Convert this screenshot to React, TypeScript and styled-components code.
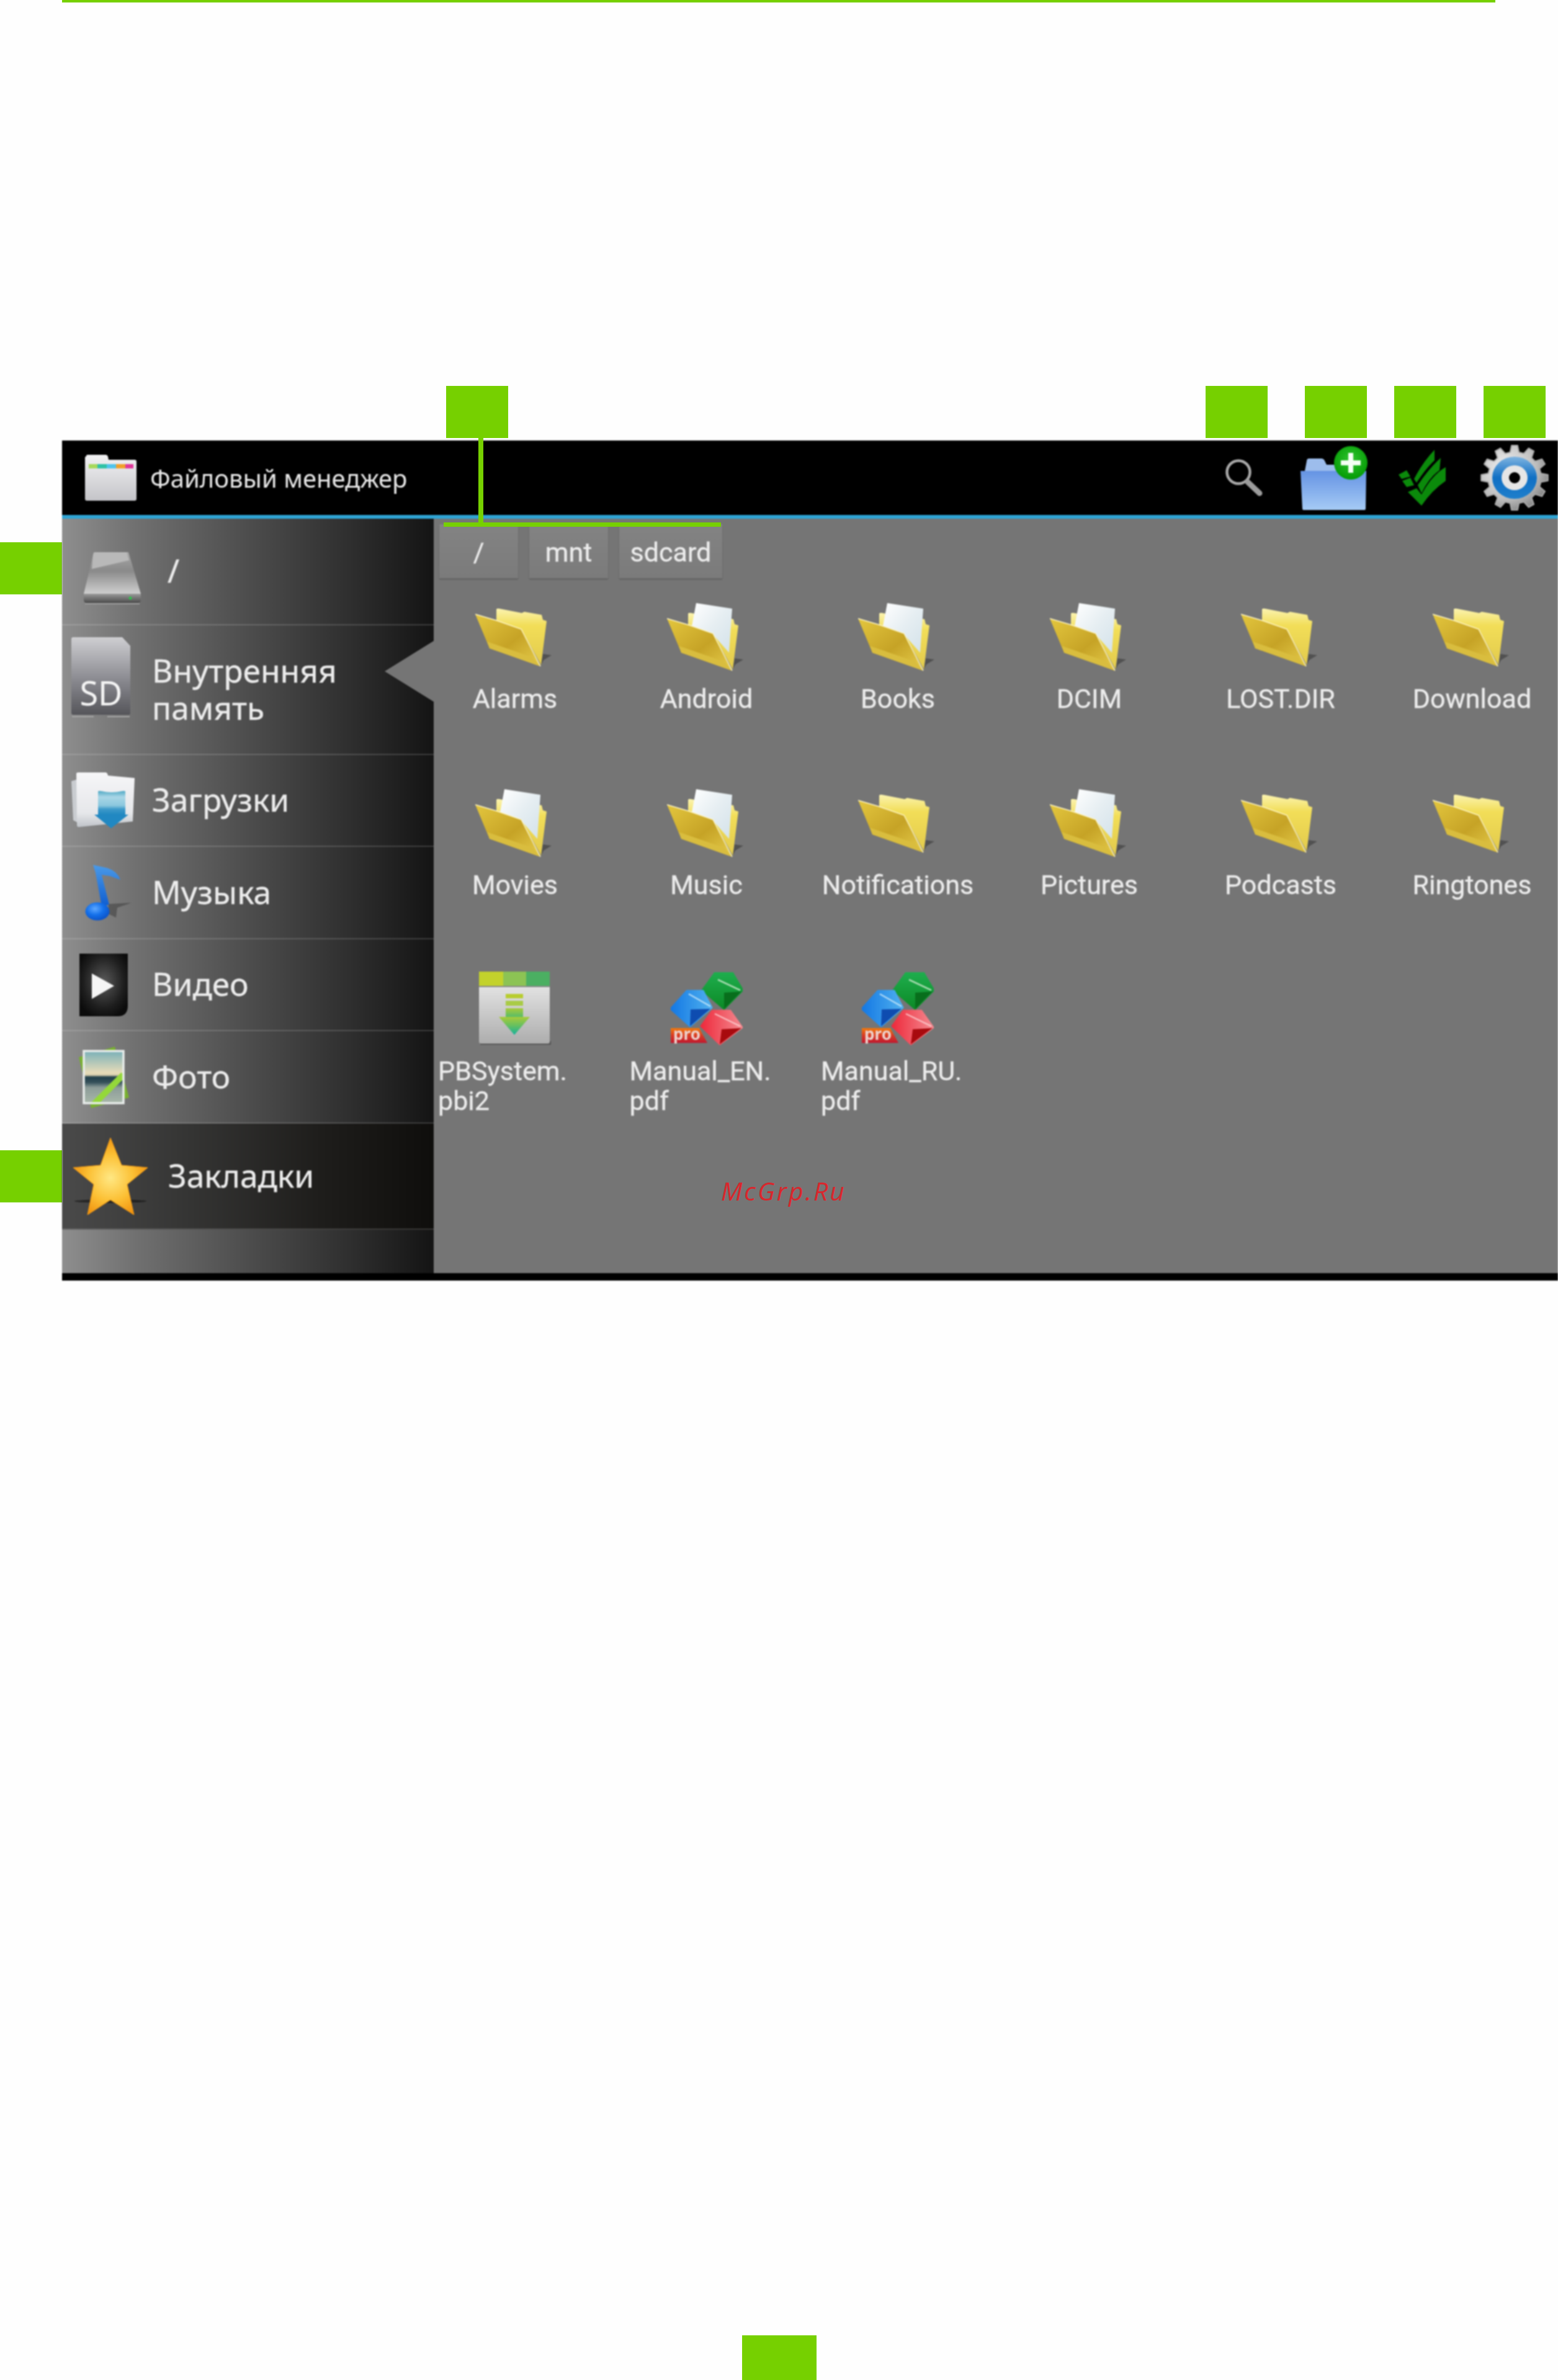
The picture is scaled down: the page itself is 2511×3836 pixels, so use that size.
import React from "react";
import styled, { createGlobalStyle } from "styled-components";

const GREEN = "#76d000";
const CONTENT = "#757575";
const ROW_BG = "linear-gradient(90deg, #8e8e8e 0%, #707070 20%, #4d4d4d 50%, #2e2e2e 78%, #141414 100%)";

const Global = createGlobalStyle`
  html, body { margin: 0; padding: 0; background: #fefefe; }
  body { font-family: "Noto Sans", "Liberation Sans", sans-serif; }
`;

const Page = styled.div`
  width: 2511px;
  height: 3836px;
  background: #fefefe;
  display: flex;
  flex-direction: column;
  overflow: hidden;
`;
const Rule = styled.div`
  margin-left: 100px;
  width: 2310px;
  height: 4px;
  flex: none;
  background: ${GREEN};
`;
const TagRow = styled.div`
  margin-top: 618px;
  padding-left: 719px;
  display: flex;
  height: 84px;
  flex: none;
`;
const Tag = styled.div<{ $before?: number }>`
  width: 100px;
  height: 84px;
  flex: none;
  background: ${GREEN};
  margin-left: ${(p) => p.$before ?? 0}px;
`;
const Figure = styled.div`
  margin-top: 4px;
  display: flex;
  position: relative;
  flex: none;
`;
const Gutter = styled.div`
  width: 100px;
  flex: none;
  padding-top: 164px;
  display: flex;
  flex-direction: column;
`;
const GutterTag = styled(Tag)<{ $top?: number }>`
  margin-top: ${(p) => p.$top ?? 0}px;
`;
const Screen = styled.div`
  width: 2411px;
  height: 1354px;
  flex: none;
  background: #000;
  display: flex;
  flex-direction: column;
  filter: blur(0.9px);
`;
const Toolbar = styled.div`
  height: 120px;
  flex: none;
  background: #000;
  border-bottom: 6px solid #2fa4d4;
  display: flex;
  align-items: center;
  padding-left: 37px;
  padding-right: 15px;
`;
const Title = styled.div`
  margin-left: 22px;
  color: #e8e8e8;
  font-family: "Noto Sans", sans-serif;
  font-size: 40px;
  white-space: nowrap;
`;
const Actions = styled.div`
  margin-left: auto;
  display: flex;
  align-items: center;
`;
const Action = styled.div<{ $gap: number }>`
  margin-left: ${(p) => p.$gap}px;
  display: flex;
`;
const Main = styled.div`
  height: 1216px;
  flex: none;
  display: flex;
`;
const Sidebar = styled.div`
  width: 599px;
  flex: none;
  display: flex;
  flex-direction: column;
`;
const Row = styled.div<{ $h: number; $active?: boolean }>`
  height: ${(p) => p.$h}px;
  flex: none;
  box-sizing: border-box;
  display: flex;
  align-items: center;
  position: relative;
  border-bottom: 2px solid rgba(255, 255, 255, 0.16);
  background: ${(p) =>
    p.$active
      ? "linear-gradient(90deg, #4a4a4a 0%, #343433 35%, #1e1d1b 70%, #0f0e0c 100%)"
      : ROW_BG};
`;
const Filler = styled.div`
  flex: 1;
  background: ${ROW_BG};
`;
const IconSlot = styled.div<{ $w: number; $pad: number; $down?: number; $up?: number }>`
  width: ${(p) => p.$w}px;
  box-sizing: border-box;
  flex: none;
  padding-left: ${(p) => p.$pad}px;
  margin-top: ${(p) => p.$down ?? 0}px;
  margin-bottom: ${(p) => p.$up ?? 0}px;
  display: flex;
`;
const RowText = styled.div`
  color: #ececec;
  font-family: "Noto Sans", sans-serif;
  font-size: 51.5px;
  line-height: 60px;
  margin-bottom: 4px;
  -webkit-text-stroke: 0.3px #ececec;
  white-space: pre-line;
`;
const Pointer = styled.div`
  position: absolute;
  right: 0;
  top: 25px;
  width: 79px;
  height: 98px;
  background: ${CONTENT};
  clip-path: polygon(0 50%, 100% 0, 100% 100%);
`;
const Content = styled.div`
  flex: 1;
  background: ${CONTENT};
  min-width: 0;
  overflow: hidden;
`;
const Crumbs = styled.div`
  padding: 9px 0 0 9px;
  display: flex;
  gap: 18px;
`;
const Crumb = styled.div<{ $w: number }>`
  width: ${(p) => p.$w}px;
  height: 87px;
  box-sizing: border-box;
  padding-top: 3px;
  display: flex;
  align-items: center;
  justify-content: center;
  color: #ececec;
  font-family: Roboto, sans-serif;
  font-size: 43px;
  -webkit-text-stroke: 0.3px #ececec;
  background: linear-gradient(180deg, #838383, #7b7b7b);
  box-shadow: 0 2px 2px rgba(0, 0, 0, 0.18);
`;
const Grid = styled.div`
  margin-top: 34px;
  padding-left: 7px;
  display: grid;
  grid-template-columns: repeat(6, 248px);
  column-gap: 60.5px;
  grid-auto-rows: 300px;
`;
const Cell = styled.div`
  display: flex;
  flex-direction: column;
  align-items: center;
`;
const CellIcon = styled.div`
  height: 120px;
  display: flex;
  align-items: center;
  justify-content: center;
  flex: none;
`;
const CellLabel = styled.div<{ $multi?: boolean }>`
  margin-top: 16px;
  width: 248px;
  color: #ececec;
  font-family: Roboto, sans-serif;
  font-size: 43px;
  line-height: 48px;
  -webkit-text-stroke: 0.3px #ececec;
  text-align: ${(p) => (p.$multi ? "left" : "center")};
  white-space: pre;
`;
const ConnectorV = styled.div`
  position: absolute;
  left: 771px;
  top: -4px;
  width: 8px;
  height: 143px;
  background: ${GREEN};
`;
const ConnectorH = styled.div`
  position: absolute;
  left: 715px;
  top: 132px;
  width: 447px;
  height: 7px;
  background: ${GREEN};
`;
const Watermark = styled.div`
  position: absolute;
  left: 1162px;
  top: 1184px;
  color: #d9262c;
  font-family: "Open Sans", sans-serif;
  font-style: italic;
  font-size: 41px;
  line-height: 50px;
  letter-spacing: 3px;
`;
const FootTag = styled.div`
  width: 120px;
  height: 72px;
  flex: none;
  margin: auto auto 0;
  background: ${GREEN};
`;
const DefsSvg = styled.svg`
  position: absolute;
  width: 0;
  height: 0;
`;

const Defs = () => (
  <DefsSvg aria-hidden="true">
    <defs>
      <linearGradient id="fBack" x1="0" y1="0" x2="0" y2="1">
        <stop offset="0" stopColor="#fbf3b0" />
        <stop offset="0.3" stopColor="#f2de58" />
        <stop offset="1" stopColor="#e2ca4c" />
      </linearGradient>
      <linearGradient id="fFront" x1="0" y1="0" x2="1" y2="1">
        <stop offset="0" stopColor="#e3c63e" />
        <stop offset="0.55" stopColor="#c6a326" />
        <stop offset="1" stopColor="#e6cd4c" />
      </linearGradient>
      <linearGradient id="fPaper" x1="0" y1="0" x2="1" y2="1">
        <stop offset="0" stopColor="#ffffff" />
        <stop offset="0.5" stopColor="#e6eef2" />
        <stop offset="1" stopColor="#d3e2ea" />
      </linearGradient>
      <linearGradient id="pbBody" x1="0" y1="0" x2="0" y2="1">
        <stop offset="0" stopColor="#f0f0f0" />
        <stop offset="1" stopColor="#adadad" />
      </linearGradient>
      <linearGradient id="pbArrow" x1="0" y1="0" x2="0" y2="1">
        <stop offset="0" stopColor="#a9cb3a" />
        <stop offset="0.5" stopColor="#63bf62" />
        <stop offset="1" stopColor="#14b29c" />
      </linearGradient>
      <linearGradient id="cubeG" x1="0" y1="0" x2="0" y2="1">
        <stop offset="0" stopColor="#1fae4e" />
        <stop offset="1" stopColor="#0c8a26" />
      </linearGradient>
      <linearGradient id="cubeB" x1="0" y1="0" x2="1" y2="0">
        <stop offset="0" stopColor="#1478e4" />
        <stop offset="1" stopColor="#4fb0ee" />
      </linearGradient>
      <linearGradient id="cubeR" x1="0" y1="0" x2="1" y2="0">
        <stop offset="0" stopColor="#ee2a3c" />
        <stop offset="1" stopColor="#f48a90" />
      </linearGradient>
      <linearGradient id="proBg" x1="0" y1="0" x2="0" y2="1">
        <stop offset="0" stopColor="#f27a0c" />
        <stop offset="0.5" stopColor="#d83a24" />
        <stop offset="1" stopColor="#c01a30" />
      </linearGradient>
      <linearGradient id="diskBody" x1="0" y1="0" x2="0" y2="1">
        <stop offset="0" stopColor="#a8a8a8" />
        <stop offset="0.45" stopColor="#8a8a8a" />
        <stop offset="1" stopColor="#cfcfcf" />
      </linearGradient>
      <linearGradient id="diskFoot" x1="0" y1="0" x2="0" y2="1">
        <stop offset="0" stopColor="#9a9a9a" />
        <stop offset="1" stopColor="#4a4a4a" />
      </linearGradient>
      <linearGradient id="sdBody" x1="0" y1="0" x2="0" y2="1">
        <stop offset="0" stopColor="#cfcfd2" />
        <stop offset="0.6" stopColor="#84848a" />
        <stop offset="1" stopColor="#55555a" />
      </linearGradient>
      <linearGradient id="dlPaper" x1="0" y1="0" x2="0" y2="1">
        <stop offset="0" stopColor="#f6f6f8" />
        <stop offset="0.75" stopColor="#e6e7ea" />
        <stop offset="1" stopColor="#bfc3c9" />
      </linearGradient>
      <linearGradient id="dlArrow" x1="0" y1="0" x2="0" y2="1">
        <stop offset="0" stopColor="#4fa8c4" />
        <stop offset="0.25" stopColor="#a9d6e6" />
        <stop offset="0.6" stopColor="#8cc8de" />
        <stop offset="0.75" stopColor="#3d9aca" />
        <stop offset="1" stopColor="#1f86c0" />
      </linearGradient>
      <linearGradient id="noteBlue" x1="0" y1="0" x2="0" y2="1">
        <stop offset="0" stopColor="#4a9ae8" />
        <stop offset="1" stopColor="#0f5dd0" />
      </linearGradient>
      <radialGradient id="noteHead" cx="0.4" cy="0.35" r="0.7">
        <stop offset="0" stopColor="#5ea8ff" />
        <stop offset="0.5" stopColor="#1470ea" />
        <stop offset="1" stopColor="#0b50c4" />
      </radialGradient>
      <radialGradient id="videoBg" cx="0.5" cy="0.45" r="0.6">
        <stop offset="0" stopColor="#5a5a5a" />
        <stop offset="0.7" stopColor="#1e1e1e" />
        <stop offset="1" stopColor="#0c0c0c" />
      </radialGradient>
      <linearGradient id="photoImg" x1="0" y1="0" x2="0" y2="1">
        <stop offset="0" stopColor="#79b0b8" />
        <stop offset="0.42" stopColor="#e8dcb8" />
        <stop offset="0.46" stopColor="#d8cfae" />
        <stop offset="0.5" stopColor="#22404a" />
        <stop offset="0.6" stopColor="#34505a" />
        <stop offset="0.7" stopColor="#8c9c98" />
        <stop offset="1" stopColor="#a8b7aa" />
      </linearGradient>
      <radialGradient id="starFill" cx="0.5" cy="0.52" r="0.55">
        <stop offset="0" stopColor="#ffe884" />
        <stop offset="0.55" stopColor="#fcc034" />
        <stop offset="1" stopColor="#ef8f0c" />
      </radialGradient>
      <linearGradient id="appFolder" x1="0" y1="0" x2="0" y2="1">
        <stop offset="0" stopColor="#f2f2f4" />
        <stop offset="1" stopColor="#c4c4c8" />
      </linearGradient>
      <linearGradient id="newFolder" x1="0" y1="0" x2="0" y2="1">
        <stop offset="0" stopColor="#6593e4" />
        <stop offset="1" stopColor="#a6cbf5" />
      </linearGradient>
      <radialGradient id="plusBg" cx="0.5" cy="0.4" r="0.6">
        <stop offset="0" stopColor="#2fc52f" />
        <stop offset="1" stopColor="#049a04" />
      </radialGradient>
      <radialGradient id="gearFill" cx="0.35" cy="0.35" r="0.8">
        <stop offset="0" stopColor="#f2f2f2" />
        <stop offset="0.6" stopColor="#bdbdbd" />
        <stop offset="1" stopColor="#6e6e6e" />
      </radialGradient>
      <linearGradient id="gearBlue" x1="0" y1="0" x2="0" y2="1">
        <stop offset="0" stopColor="#7fb4e0" />
        <stop offset="0.5" stopColor="#0f6fc4" />
        <stop offset="1" stopColor="#1f7fcc" />
      </linearGradient>
      <clipPath id="photoClip">
        <rect x="8" y="8" width="64" height="84" />
      </clipPath>
    </defs>
  </DefsSvg>
);

/* ---------- toolbar icons ---------- */
const AppFolderIcon = () => (
  <svg width="83" height="74" viewBox="0 0 83 74">
    <path d="M2 2 Q2 0 4 0 H33 Q36 0 37 3 L38 8 H80 Q83 8 83 11 V71 Q83 74 80 74 H3 Q0 74 0 71 V4 Z" fill="url(#appFolder)" />
    <rect x="6" y="15" width="14" height="7" fill="#a6d95b" />
    <rect x="20" y="15" width="15" height="7" fill="#2fc2a6" />
    <rect x="35" y="15" width="15" height="7" fill="#4fc4ec" />
    <rect x="50" y="15" width="15" height="7" fill="#f0a02a" />
    <rect x="65" y="15" width="13" height="7" fill="#e0389a" />
  </svg>
);
const SearchIcon = () => (
  <svg width="60" height="60" viewBox="0 0 60 60">
    <circle cx="21" cy="21" r="18.5" fill="none" stroke="#a8a8a8" strokeWidth="4.5" />
    <line x1="36" y1="37" x2="55" y2="55" stroke="#9c9c9c" strokeWidth="9" strokeLinecap="round" />
  </svg>
);
const NewFolderIcon = () => (
  <svg width="108" height="103" viewBox="0 0 108 103">
    <path d="M10 24 Q10 20 14 20 H34 Q38 20 40 26 L42 30 H90 V50 H5 Z" fill="#9dbdec" />
    <path d="M0 40 H106 L105 101 Q105 103 103 103 H5 Q3 103 3 101 Z" fill="url(#newFolder)" />
    <ellipse cx="81" cy="27" rx="27" ry="27" fill="url(#plusBg)" />
    <path d="M77 11 H85 V23 H97 V31 H85 V43 H77 V31 H65 V23 H77 Z" fill="#f4fff4" />
  </svg>
);
const CheckIcon = () => (
  <svg width="77" height="90" viewBox="0 0 77 90" fill="#0b8a0b">
    <polygon points="1,40 14,33 20,43 6,47" />
    <polygon points="7,50 20,45 26,57 14,60" />
    <path d="M26 47 Q40 20 59 0 L59 17 Q45 30 30 53 Z" />
    <path d="M32 57 Q50 30 69 13 L67 33 Q50 45 38 70 Z" />
    <path d="M16 68 L30 62 L38 72 Q55 40 77 28 L77 50 Q55 65 38 90 Z" />
  </svg>
);
const gearPath = (() => {
  const teeth = 12;
  const pts: string[] = [];
  for (let i = 0; i < teeth; i++) {
    const a = (i / teeth) * Math.PI * 2 - Math.PI / 2;
    const s = (Math.PI * 2) / teeth;
    const at = (r: number, t: number) =>
      `${(55 + r * Math.cos(t)).toFixed(1)},${(53 + r * Math.sin(t) * 0.97).toFixed(1)}`;
    pts.push(at(43, a - s * 0.32), at(54, a - s * 0.17), at(54, a + s * 0.17), at(43, a + s * 0.32));
  }
  return pts.join(" ");
})();
const GearIcon = () => (
  <svg width="110" height="106" viewBox="0 0 110 106">
    <polygon points={gearPath} fill="url(#gearFill)" stroke="#aaa" strokeWidth="2" strokeLinejoin="round" />
    <ellipse cx="55" cy="53" rx="36" ry="34" fill="url(#gearBlue)" />
    <ellipse cx="55" cy="53" rx="21" ry="20" fill="#e6e6e6" />
    <ellipse cx="55" cy="53" rx="9" ry="9" fill="#000" />
  </svg>
);

/* ---------- sidebar icons ---------- */
const DiskIcon = () => (
  <svg width="92" height="85" viewBox="0 0 92 85">
    <path d="M16 1 H72 L92 68 H0 Z" fill="url(#diskBody)" />
    <path d="M15 5 Q16 1 20 1 H69 L73 14 L13 28 Z" fill="#b9b9b9" />
    <path d="M0 68 H92 V78 Q92 83 87 83 H5 Q0 83 0 78 Z" fill="url(#diskFoot)" />
    <rect x="2" y="83" width="88" height="2" fill="#a0a0a0" />
    <circle cx="75" cy="75" r="2.5" fill="#2fc24a" />
  </svg>
);
const SdIcon = () => (
  <svg width="95" height="130" viewBox="0 0 95 130">
    <path d="M3 0 H82 L95 14 V122 Q95 125 92 125 H3 Q0 125 0 122 V3 Q0 0 3 0 Z" fill="url(#sdBody)" />
    <path d="M1 128 H36 M58 128 H94" stroke="#a5a5a5" strokeWidth="2" />
    <text x="48" y="110" textAnchor="middle" fontFamily="'Noto Sans', sans-serif" fontSize="54" fill="#f4f4f4">SD</text>
  </svg>
);
const DownloadsIcon = () => (
  <svg width="103" height="92" viewBox="0 0 103 92">
    <path d="M0 15 L10 12 L14 84 L3 78 Z" fill="#c9ccd0" />
    <path d="M8 3 Q8 1 11 1 H55 Q58 1 59 6 L102 10 L99 80 L12 89 Q9 89 9 86 Z" fill="url(#dlPaper)" />
    <path d="M43 32 Q43 30 48 31 Q65 35 82 31 Q87 30 87 32 L87 70 H43 Z" fill="url(#dlArrow)" />
    <polygon points="37,69 92,69 64,91" fill="#2188c2" />
  </svg>
);
const MusicIcon = () => (
  <svg width="75" height="91" viewBox="0 0 75 91">
    <path d="M38 64 L75 62 L52 70 L50 86 L38 80 Z" fill="#3e3e3e" opacity="0.55" />
    <path d="M13 1 L36 6 Q52 11 57 25 L40 19 Q33 18 27 17 L39 65 L27 68 L17 14 Z" fill="url(#noteBlue)" />
    <ellipse cx="20" cy="76" rx="19.5" ry="14.5" fill="url(#noteHead)" />
  </svg>
);
const VideoIcon = () => (
  <svg width="78" height="101" viewBox="0 0 78 101">
    <path d="M0 0 H78 V84 Q78 101 62 101 H0 Z" fill="url(#videoBg)" />
    <polygon points="20,32 56,52 20,73" fill="#f5f5f5" />
  </svg>
);
const PhotoIcon = () => (
  <svg width="83" height="100" viewBox="0 0 83 100">
    <polygon points="0,18 58,1 81,83 20,100" fill="#78b030" />
    <rect x="8" y="8" width="64" height="84" fill="url(#photoImg)" />
    <line x1="24" y1="94" x2="72" y2="46" stroke="#94d83a" strokeWidth="10" clipPath="url(#photoClip)" />
    <rect x="8" y="8" width="64" height="84" fill="none" stroke="#e8ecea" strokeWidth="3.5" />
  </svg>
);
const StarIcon = () => (
  <svg width="120" height="124" viewBox="0 0 120 124">
    <ellipse cx="60" cy="102" rx="58" ry="3" fill="#000" opacity="0.45" />
    <polygon
      points="60,0 78,44 120,48 87,75 98,124 60,100 23,124 33,75 0,48 44,44"
      fill="url(#starFill)"
      stroke="#f39a14"
      strokeWidth="1"
      strokeLinejoin="round"
    />
  </svg>
);

/* ---------- grid icons ---------- */
const FolderBody = () => (
  <path d="M35 16 Q36 14 40 15 L76 22 L80 20 L108 25 L110 33 L116 35 L107 106 L75 48 L35 34 Z" fill="url(#fBack)" />
);
const FolderFront = () => (
  <>
    <polygon points="107,106 111,98 124,90 110,88" fill="#000" opacity="0.3" />
    <polygon points="1,24 35,34 75,48 106,108 24,79" fill="url(#fFront)" />
    <polygon points="20,68 92,93 106,108 24,79" fill="#d9bd3e" />
    <polyline points="1,24 35,34 75,48 106,108" fill="none" stroke="#fff6c4" strokeWidth="1.5" />
  </>
);
const Folder = ({ paper }: { paper: boolean }) => (
  <svg width="130" height="120" viewBox="0 0 130 120">
    {paper ? (
      <>
        <g transform="translate(0 7)"><FolderBody /></g>
        <polygon points="48,6 106,15 101,86 78,60 40,48" fill="url(#fPaper)" />
        <g transform="translate(0 7)"><FolderFront /></g>
      </>
    ) : (
      <>
        <FolderBody />
        <FolderFront />
      </>
    )}
  </svg>
);
const PackageIcon = () => (
  <svg width="116" height="120" viewBox="0 0 116 120">
    <rect x="2" y="112" width="114" height="6" fill="#000" opacity="0.25" />
    <rect x="0" y="0" width="114" height="116" rx="3" fill="url(#pbBody)" />
    <rect x="0" y="0" width="39" height="23" fill="#c3d22b" />
    <rect x="39" y="0" width="37" height="23" fill="#8cc354" />
    <rect x="76" y="0" width="38" height="23" fill="#4baf62" />
    <rect x="0" y="23" width="114" height="2" fill="#888" />
    <rect x="43" y="36" width="28" height="7" fill="#b8cd30" />
    <rect x="43" y="47" width="28" height="8" fill="#a9cb46" />
    <rect x="43" y="59" width="28" height="24" fill="url(#pbArrow)" />
    <polygon points="32,73 82,73 57,102" fill="url(#pbArrow)" />
  </svg>
);
const PdfIcon = () => (
  <svg width="116" height="118" viewBox="0 0 116 118">
    <path d="M72 0 H99 L116 29 L86 59 L51 29 Z" fill="url(#cubeG)" stroke="url(#cubeG)" strokeWidth="3" strokeLinejoin="round" />
    <polygon points="86,33 114,31 86,59" fill="#086e1c" />
    <line x1="76" y1="12" x2="112" y2="29" stroke="#dff3dc" strokeWidth="2.5" opacity="0.7" />
    <path d="M26 30 H52 L66 57 L31 87 L0 59 Z" fill="url(#cubeB)" stroke="url(#cubeB)" strokeWidth="3" strokeLinejoin="round" />
    <polygon points="32,60 64,59 31,87" fill="#0e4cb0" />
    <line x1="29" y1="35" x2="64" y2="55" stroke="#dcf1fb" strokeWidth="2.5" opacity="0.7" />
    <path d="M67 62 H96 L115 89 L79 116 L49 87 Z" fill="url(#cubeR)" stroke="url(#cubeR)" strokeWidth="3" strokeLinejoin="round" />
    <polygon points="82,92 114,90 79,116" fill="#a80a0e" />
    <line x1="71" y1="67" x2="112" y2="87" stroke="#fde0e1" strokeWidth="2.5" opacity="0.7" />
    <polygon points="0,90 46,90 59,114 0,114" fill="url(#proBg)" />
    <text x="26" y="109" textAnchor="middle" fontFamily="'Noto Sans', sans-serif" fontWeight="700" fontSize="26" fill="#eed2cc">pro</text>
  </svg>
);

const files: { name: string; icon: "empty" | "paper" | "pkg" | "pdf"; multi?: boolean }[] = [
  { name: "Alarms", icon: "empty" },
  { name: "Android", icon: "paper" },
  { name: "Books", icon: "paper" },
  { name: "DCIM", icon: "paper" },
  { name: "LOST.DIR", icon: "empty" },
  { name: "Download", icon: "empty" },
  { name: "Movies", icon: "paper" },
  { name: "Music", icon: "paper" },
  { name: "Notifications", icon: "empty" },
  { name: "Pictures", icon: "paper" },
  { name: "Podcasts", icon: "empty" },
  { name: "Ringtones", icon: "empty" },
  { name: "PBSystem.\npbi2", icon: "pkg", multi: true },
  { name: "Manual_EN.\npdf", icon: "pdf", multi: true },
  { name: "Manual_RU.\npdf", icon: "pdf", multi: true },
];

const FileIcon = ({ kind }: { kind: string }) => {
  if (kind === "pkg") return <PackageIcon />;
  if (kind === "pdf") return <PdfIcon />;
  return <Folder paper={kind === "paper"} />;
};

export default function App() {
  return (
    <Page>
      <Global />
      <Defs />
      <Rule />
      <TagRow>
        <Tag />
        <Tag $before={1124} />
        <Tag $before={60} />
        <Tag $before={44} />
        <Tag $before={44} />
      </TagRow>
      <Figure>
        <Gutter>
          <GutterTag />
          <GutterTag $top={896} />
        </Gutter>
        <Screen>
          <Toolbar>
            <AppFolderIcon />
            <Title>Файловый менеджер</Title>
            <Actions>
              <SearchIcon />
              <Action $gap={61}><NewFolderIcon /></Action>
              <Action $gap={49}><CheckIcon /></Action>
              <Action $gap={56}><GearIcon /></Action>
            </Actions>
          </Toolbar>
          <Main>
            <Sidebar>
              <Row $h={172}>
                <IconSlot $w={170} $pad={35} $down={20}><DiskIcon /></IconSlot>
                <RowText>/</RowText>
              </Row>
              <Row $h={209}>
                <IconSlot $w={145} $pad={15} $up={40}><SdIcon /></IconSlot>
                <RowText>{"Внутренняя\nпамять"}</RowText>
                <Pointer />
              </Row>
              <Row $h={148}>
                <IconSlot $w={145} $pad={15}><DownloadsIcon /></IconSlot>
                <RowText>Загрузки</RowText>
              </Row>
              <Row $h={149}>
                <IconSlot $w={145} $pad={37}><MusicIcon /></IconSlot>
                <RowText>Музыка</RowText>
              </Row>
              <Row $h={148}>
                <IconSlot $w={145} $pad={28}><VideoIcon /></IconSlot>
                <RowText>Видео</RowText>
              </Row>
              <Row $h={149}>
                <IconSlot $w={145} $pad={27}><PhotoIcon /></IconSlot>
                <RowText>Фото</RowText>
              </Row>
              <Row $h={171} $active>
                <IconSlot $w={171} $pad={18}><StarIcon /></IconSlot>
                <RowText>Закладки</RowText>
              </Row>
              <Filler />
            </Sidebar>
            <Content>
              <Crumbs>
                <Crumb $w={127}>/</Crumb>
                <Crumb $w={127}>mnt</Crumb>
                <Crumb $w={166}>sdcard</Crumb>
              </Crumbs>
              <Grid>
                {files.map((f) => (
                  <Cell key={f.name}>
                    <CellIcon><FileIcon kind={f.icon} /></CellIcon>
                    <CellLabel $multi={f.multi}>{f.name}</CellLabel>
                  </Cell>
                ))}
              </Grid>
            </Content>
          </Main>
        </Screen>
        <ConnectorV />
        <ConnectorH />
        <Watermark>McGrp.Ru</Watermark>
      </Figure>
      <FootTag />
    </Page>
  );
}
